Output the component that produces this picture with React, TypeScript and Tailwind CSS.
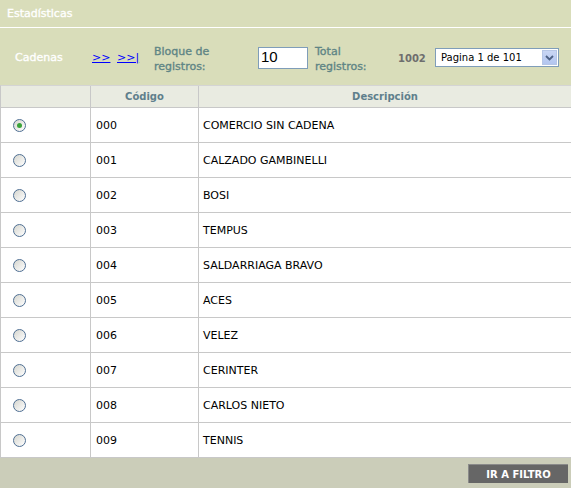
import React from "react";

const rows = [
  ["000", "COMERCIO SIN CADENA"],
  ["001", "CALZADO GAMBINELLI"],
  ["002", "BOSI"],
  ["003", "TEMPUS"],
  ["004", "SALDARRIAGA BRAVO"],
  ["005", "ACES"],
  ["006", "VELEZ"],
  ["007", "CERINTER"],
  ["008", "CARLOS NIETO"],
  ["009", "TENNIS"],
];

function Radio({ checked }: { checked?: boolean }) {
  return (
    <div className="w-[13px] h-[13px] rounded-full border border-[#4f6f93] bg-gradient-to-br from-[#d6d6cf] to-white flex items-center justify-center">
      {checked && <div className="w-[5px] h-[5px] rounded-full bg-[#3aa33a]" />}
    </div>
  );
}

export default function App() {
  return (
    <div
      className="w-[571px] h-[488px] bg-[#d9ddba] flex flex-col overflow-hidden"
      style={{ fontFamily: "'DejaVu Sans', Verdana, sans-serif" }}
    >
      <div className="h-[27px] flex items-center px-[7px] pt-[2px] text-[11px] text-white [-webkit-text-stroke:0.35px_#ffffff]">
        Estadísticas
      </div>
      <div className="h-px bg-white" />
      <div className="h-[57px] flex items-center text-[11px] pt-[2px]">
        <div className="w-[92px] pl-[15px] text-white pt-[2px] [-webkit-text-stroke:0.35px_#ffffff]">Cadenas</div>
        <a className="text-[#0000ff] underline text-[11px] w-[25px] pt-[2px]">&gt;&gt;</a>
        <a className="text-[#0000ff] underline text-[11px] w-[37px] pt-[2px]">&gt;&gt;|</a>
        <div className="w-[104px] text-[#5f8585] leading-[15px] pt-[2px] [-webkit-text-stroke:0.35px_#5f8585]">
          Bloque de
          <br />
          registros:
        </div>
        <div className="w-[57px]">
          <div
            className="w-[50px] h-[22px] bg-white border border-[#7f9db9] flex items-center pl-[2px] text-[15px] text-black"
            style={{ fontFamily: "'Liberation Sans', Arial, sans-serif" }}
          >
            10
          </div>
        </div>
        <div className="w-[83px] text-[#5f8585] leading-[15px] pt-[2px] [-webkit-text-stroke:0.35px_#5f8585]">
          Total
          <br />
          registros:
        </div>
        <div className="w-[37px] text-[#6e6e6e] text-[10px] font-bold pt-[2px]">1002</div>
        <div className="w-[124px] h-[19px] bg-white border border-[#7f9db9] flex items-center justify-between text-[10px] text-black">
          <span className="pl-[5px]">Pagina 1 de 101</span>
          <div className="w-[15px] h-[15px] mr-px bg-gradient-to-b from-[#c9d6f4] to-[#b3c6f0] border border-[#b6c6e6] flex items-center justify-center">
            <svg width="9" height="6" viewBox="0 0 9 6">
              <path d="M1 1 L4.5 4.5 L8 1" stroke="#4d6185" strokeWidth="1.8" fill="none" />
            </svg>
          </div>
        </div>
      </div>
      <div className="bg-white border-t border-[#d4d4d4] border-l border-l-[#c8c8c8]">
        <div className="flex h-[22px] bg-[#e9ebe1] border-b border-[#c8c8c8] text-[10px] font-bold text-[#5f7f8c]">
          <div className="w-[90px] border-r border-[#c8c8c8]" />
          <div className="w-[108px] border-r border-[#c8c8c8] flex items-center justify-center">Código</div>
          <div className="flex-1 flex items-center justify-center">Descripción</div>
        </div>
        {rows.map(([c, d], i) => (
          <div key={c} className="flex h-[35px] border-b border-[#c8c8c8] text-[11px] text-black">
            <div className="w-[90px] border-r border-[#c8c8c8] flex items-center pl-[12px]">
              <Radio checked={i === 0} />
            </div>
            <div className="w-[108px] border-r border-[#c8c8c8] flex items-center pl-[5px] pt-[2px]">{c}</div>
            <div className="flex-1 flex items-center pl-[4px] pt-[2px]">{d}</div>
          </div>
        ))}
      </div>
      <div className="flex-1 bg-[#cbcdb9] flex justify-end pt-[6px] pr-[3px]">
        <div className="w-[100px] h-[19px] bg-[#666666] border-t border-l border-[#8a8a8a] flex items-center justify-center text-[10px] font-bold text-white">
          IR A FILTRO
        </div>
      </div>
    </div>
  );
}
